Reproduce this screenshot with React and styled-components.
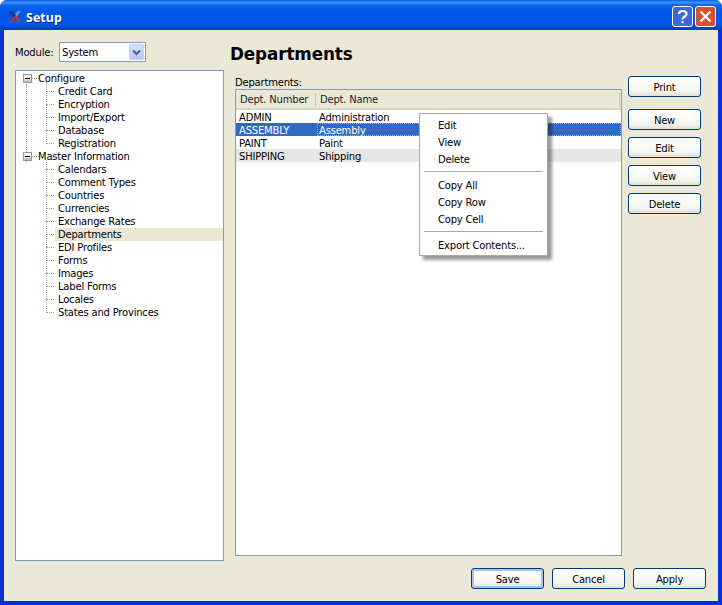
import React from 'react'
import styled, { createGlobalStyle } from 'styled-components'

const GlobalStyle = createGlobalStyle`
  html, body { margin: 0; padding: 0; background: #fff; }
  body { font-family: "DejaVu Sans", Verdana, sans-serif; font-size: 10px; letter-spacing: -0.2px; color: #000; }
`

const treeData = [
  { name: 'Configure', items: ['Credit Card', 'Encryption', 'Import/Export', 'Database', 'Registration'] },
  {
    name: 'Master Information',
    items: ['Calendars', 'Comment Types', 'Countries', 'Currencies', 'Exchange Rates', 'Departments', 'EDI Profiles', 'Forms', 'Images', 'Label Forms', 'Locales', 'States and Provinces'],
  },
]

const depts = [
  ['ADMIN', 'Administration'],
  ['ASSEMBLY', 'Assembly'],
  ['PAINT', 'Paint'],
  ['SHIPPING', 'Shipping'],
]

const menuGroups = [['Edit', 'View', 'Delete'], ['Copy All', 'Copy Row', 'Copy Cell'], ['Export Contents...']]

const App = () => (
  <Window>
    <GlobalStyle />
    <TitleBar>
      <Logo viewBox="0 0 13 11">
        <path d="M13 0h-3.500L6 4.500l2 2z" fill="#5f9be0" />
        <path d="M6 5l-5 6h3.500L7.500 7z" fill="#c8331e" />
        <path d="M6.500 5.500L10 11h3L8 4.500z" fill="#e0341c" />
        <path d="M0 0h4.500L8 4.500 5.500 6.500z" fill="#1f3a92" />
      </Logo>
      <TitleText>Setup</TitleText>
      <TitleButton $color="#3b66dc">
        <svg width="19" height="19" viewBox="0 0 19 19">
          <path d="M6 7C6 3 13.500 3 13.500 7 13.500 9.500 9.500 9.500 9.500 12.500" fill="none" stroke="#fff" strokeWidth="2.200" />
          <rect x="8.400" y="14" width="2.200" height="2.200" fill="#fff" />
        </svg>
      </TitleButton>
      <TitleButton $color="#d9502c">
        <svg width="19" height="19" viewBox="0 0 19 19">
          <path d="M4.500 4.500l10 10M14.500 4.500l-10 10" stroke="#fff" strokeWidth="2.400" />
        </svg>
      </TitleButton>
    </TitleBar>
    <Content>
      <Main>
        <LeftColumn>
          <ModuleRow>
            <ModuleLabel>Module:</ModuleLabel>
            <Combo>
              <ComboText>System</ComboText>
              <ComboArrow>
                <svg width="9" height="7" viewBox="0 0 9 7">
                  <path d="M1 1.500l3.500 3.500L8 1.500" fill="none" stroke="#4d6185" strokeWidth="2" />
                </svg>
              </ComboArrow>
            </Combo>
          </ModuleRow>
          <TreePanel>
            {treeData.map((group) => (
              <TreeGroup key={group.name}>
                <GroupRow>
                  <Expander />
                  <GroupName>{group.name}</GroupName>
                </GroupRow>
                <LeafList>
                  {group.items.map((item) => (
                    <Leaf key={item}>
                      <LeafLabel $selected={item === 'Departments'}>{item}</LeafLabel>
                    </Leaf>
                  ))}
                </LeafList>
              </TreeGroup>
            ))}
          </TreePanel>
        </LeftColumn>
        <CenterColumn>
          <Heading>Departments</Heading>
          <TableLabel>Departments:</TableLabel>
          <TablePanel>
            <HeaderRow>
              <HeaderCell $width={80}>Dept. Number</HeaderCell>
              <HeaderCell>Dept. Name</HeaderCell>
            </HeaderRow>
            {depts.map(([num, name], i) => (
              <Row key={num} $selected={i === 1} $alt={i === 3}>
                <Cell $width={81}>{num}</Cell>
                <Cell $focused={i === 1}>{name}</Cell>
              </Row>
            ))}
            <ContextMenu>
              {menuGroups.map((group, i) => (
                <div key={group[0]}>
                  {i > 0 && <MenuSeparator />}
                  {group.map((item) => (
                    <MenuItem key={item}>{item}</MenuItem>
                  ))}
                </div>
              ))}
            </ContextMenu>
          </TablePanel>
        </CenterColumn>
        <ButtonColumn>
          <Button>Print</Button>
          <ActionGroup>
            <Button>New</Button>
            <Button>Edit</Button>
            <Button>View</Button>
            <Button>Delete</Button>
          </ActionGroup>
        </ButtonColumn>
      </Main>
      <Footer>
        <Button $default>Save</Button>
        <Button>Cancel</Button>
        <Button>Apply</Button>
      </Footer>
    </Content>
  </Window>
)

export default App

const Window = styled.div`
  width: 722px;
  height: 605px;
  box-sizing: border-box;
  display: flex;
  flex-direction: column;
  overflow: hidden;
  border-radius: 7px 7px 0 0;
  background: #0831d9;
`

const TitleBar = styled.div`
  height: 30px;
  flex: none;
  box-sizing: border-box;
  display: flex;
  align-items: center;
  gap: 2px;
  padding: 3px 6px 0 8px;
  background: linear-gradient(180deg, #0a5be0 0%, #3c93ff 8%, #0a62ea 18%, #0055e6 50%, #0058ee 80%, #0048cc 92%, #003dbb 100%);
`

const Logo = styled.svg`
  width: 13px;
  height: 11px;
  margin-right: 3px;
`

const TitleText = styled.div`
  flex: 1;
  padding-top: 1px;
  font-family: "Noto Sans", sans-serif;
  font-weight: 700;
  font-size: 12.500px;
  letter-spacing: 0;
  color: #fff;
  text-shadow: 1px 1px 0 #0f1f7f;
`

const TitleButton = styled.div`
  width: 21px;
  height: 21px;
  box-sizing: border-box;
  display: flex;
  align-items: center;
  justify-content: center;
  border: 1px solid #fff;
  border-radius: 3px;
  background: ${(p) => p.$color};
`

const Content = styled.div`
  flex: 1;
  margin: 0 4px 4px;
  padding: 12px 12px 12px 11px;
  background: #ebe8d8;
  display: flex;
  flex-direction: column;
  min-height: 0;
`

const Main = styled.div`
  display: flex;
  height: 519px;
`

const LeftColumn = styled.div`
  width: 209px;
  display: flex;
  flex-direction: column;
`

const ModuleRow = styled.div`
  height: 20px;
  display: flex;
  align-items: center;
  gap: 7px;
  margin-bottom: 8px;
`

const ModuleLabel = styled.span`
  width: 37px;
  white-space: nowrap;
`

const Combo = styled.div`
  width: 87px;
  height: 20px;
  box-sizing: border-box;
  display: flex;
  align-items: center;
  justify-content: space-between;
  border: 1px solid #7f9db9;
  background: #fff;
  padding: 1px;
`

const ComboText = styled.span`
  padding-left: 1px;
`

const ComboArrow = styled.div`
  width: 15px;
  height: 16px;
  display: flex;
  align-items: center;
  justify-content: center;
  background: linear-gradient(180deg, #d6e2fb, #b4c8f6);
  border: 1px solid #c3d3f8;
  box-sizing: border-box;
  border-radius: 1px;
`

const TreePanel = styled.div`
  flex: 1;
  box-sizing: border-box;
  border: 1px solid #7f9db9;
  background: #fff;
  padding-top: 1px;
`

const TreeGroup = styled.div`
  position: relative;
  &:first-child::before {
    content: '';
    position: absolute;
    left: 10px;
    top: 12px;
    height: 78px;
    border-left: 1px dotted #a3a08a;
  }
`

const GroupRow = styled.div`
  height: 13px;
  display: flex;
  align-items: center;
  padding-left: 7px;
  position: relative;
`

const GroupName = styled.span`
  margin-left: 6px;
  line-height: 13px;
`

const Expander = styled.div`
  width: 9px;
  height: 9px;
  box-sizing: border-box;
  border: 1px solid #7f9db9;
  background: linear-gradient(180deg, #fff 30%, #bdb9a6 100%);
  position: relative;
  flex: none;
  &::before {
    content: '';
    position: absolute;
    left: 1px;
    right: 1px;
    top: 3px;
    height: 1px;
    background: #000;
  }
  &::after {
    content: '';
    position: absolute;
    left: 8px;
    top: 3px;
    width: 5px;
    border-top: 1px dotted #a3a08a;
  }
`

const LeafList = styled.div`
  position: relative;
  &::before {
    content: '';
    position: absolute;
    left: 30px;
    top: -3px;
    bottom: 6px;
    border-left: 1px dotted #a3a08a;
  }
`

const Leaf = styled.div`
  height: 13px;
  display: flex;
  padding-left: 39px;
  position: relative;
  &::before {
    content: '';
    position: absolute;
    left: 30px;
    top: 6px;
    width: 8px;
    border-top: 1px dotted #a3a08a;
  }
`

const LeafLabel = styled.div`
  flex: 1;
  padding-left: 3px;
  line-height: 13px;
  background: ${(p) => (p.$selected ? '#ebe8d8' : 'transparent')};
`

const CenterColumn = styled.div`
  width: 398px;
  margin-left: 6px;
  display: flex;
  flex-direction: column;
`

const Heading = styled.div`
  font-size: 16.800px;
  font-weight: 700;
  letter-spacing: -0.1px;
  line-height: 24px;
  height: 32px;
`

const TableLabel = styled.div`
  padding-left: 5px;
  line-height: 13px;
  height: 13px;
  margin-top: 2px;
`

const TablePanel = styled.div`
  margin-left: 5px;
  width: 387px;
  height: 467px;
  box-sizing: border-box;
  border: 1px solid #7f9db9;
  background: #fff;
  position: relative;
`

const HeaderRow = styled.div`
  height: 20px;
  box-sizing: border-box;
  display: flex;
  align-items: center;
  padding-top: 2px;
  background: #ebe8d8;
  border-bottom: 2px solid #d8d5c4;
`

const HeaderCell = styled.div`
  width: ${(p) => (p.$width ? `${p.$width}px` : 'auto')};
  flex: ${(p) => (p.$width ? 'none' : '1')};
  box-sizing: border-box;
  padding-left: 4px;
  margin-right: ${(p) => (p.$width ? '0' : '1px')};
  border-right: 1px solid #c9c6b4;
  line-height: 14px;
  white-space: nowrap;
  color: #222;
`

const Row = styled.div`
  height: 13px;
  display: flex;
  background: ${(p) => (p.$selected ? '#316ac5' : p.$alt ? '#e6e6e6' : '#fff')};
  color: ${(p) => (p.$selected ? '#fff' : '#000')};
`

const Cell = styled.div`
  width: ${(p) => (p.$width ? `${p.$width}px` : 'auto')};
  flex: ${(p) => (p.$width ? 'none' : '1')};
  box-sizing: border-box;
  padding: 1px 0 0 ${(p) => (p.$width ? '3px' : '2px')};
  line-height: 13px;
  outline: ${(p) => (p.$focused ? '1px dotted #e8a23c' : 'none')};
  outline-offset: -1px;
`

const ContextMenu = styled.div`
  position: absolute;
  left: 183px;
  top: 23px;
  width: 129px;
  height: 143px;
  box-sizing: border-box;
  padding: 3px 2px;
  border: 1px solid #aca899;
  background: #fff;
  box-shadow: 4px 4px 3px rgba(0, 0, 0, 0.4);
  color: #000;
`

const MenuSeparator = styled.div`
  height: 1px;
  background: #aca899;
  margin: 3px 2px 5px;
`

const MenuItem = styled.div`
  height: 17px;
  line-height: 17px;
  padding-left: 16px;
  white-space: nowrap;
`

const ButtonColumn = styled.div`
  width: 73px;
  padding-top: 34px;
  display: flex;
  flex-direction: column;
`

const ActionGroup = styled.div`
  margin-top: 12px;
  display: flex;
  flex-direction: column;
  gap: 7px;
`

const Button = styled.div`
  width: 73px;
  height: 21px;
  box-sizing: border-box;
  padding-top: 1px;
  display: flex;
  align-items: center;
  justify-content: center;
  border: 1px solid #003c74;
  border-radius: 3px;
  background: linear-gradient(180deg, #fff 0%, #f5f5ef 75%, #e2dfd2 100%);
  box-shadow: ${(p) => (p.$default ? 'inset 0 0 0 2px #a9c4ec' : 'none')};
`

const Footer = styled.div`
  display: flex;
  justify-content: flex-end;
  gap: 8px;
  margin-top: 7px;
`
